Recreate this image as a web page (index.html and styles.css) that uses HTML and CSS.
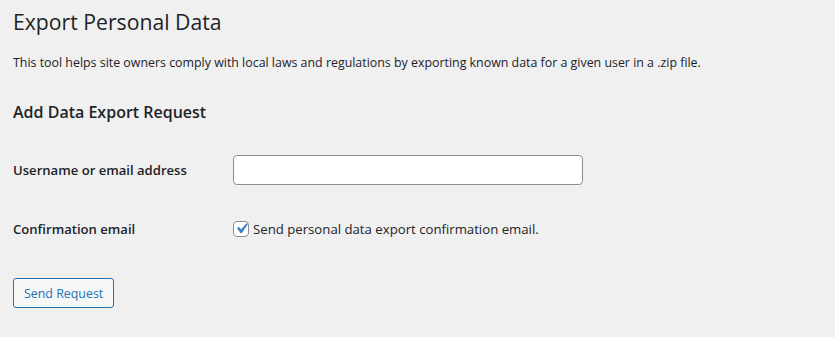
FILE: index.html
```html
<!DOCTYPE html>
<html>
<head>
<meta charset="utf-8">
<link rel="stylesheet" href="styles.css">
</head>
<body>
<div class="wrap">
  <h1 class="title">Export Personal Data</h1>
  <p class="intro">This tool helps site owners comply with local laws and regulations by exporting known data for a given user in a .zip file.</p>
  <h2 class="subtitle">Add Data Export Request</h2>
  <div class="form">
    <div class="row row-user">
      <label class="label">Username or email address</label>
      <input class="text-input" type="text">
    </div>
    <div class="row row-confirm">
      <div class="label">Confirmation email</div>
      <label class="check-label">
        <span class="checkbox"><svg viewBox="0 0 20 20" width="21" height="21"><path d="M14.83 4.89l1.34.94-5.81 8.38H9.02L5.78 9.67l1.34-1.25 2.57 2.4z" fill="#3582c4"/></svg></span>
        <span>Send personal data export confirmation email.</span>
      </label>
    </div>
  </div>
  <button class="button">Send Request</button>
</div>
</body>
</html>
```

FILE: styles.css
```css
html, body {
  margin: 0;
  padding: 0;
  background: #f0f0f1;
  color: #1d2327;
  font-family: "Open Sans", "Noto Sans", sans-serif;
  font-size: 13px;
}
.wrap {
  padding: 0 13px;
  display: flex;
  flex-direction: column;
  align-items: flex-start;
}
.title {
  font-size: 21.2px;
  font-weight: 400;
  line-height: 30px;
  margin: 7px 0 0;
}
.intro {
  font-size: 12.4px;
  margin: 16px 0 0;
  line-height: 20px;
}
.subtitle {
  font-size: 16px;
  font-weight: 600;
  line-height: 24px;
  margin: 27px 0 0;
}
.form {
  display: flex;
  flex-direction: column;
}
.row {
  display: flex;
  align-items: center;
}
.label {
  width: 220px;
  font-size: 13.1px;
  font-weight: 600;
}
.row-user {
  margin-top: 31px;
}
.text-input {
  width: 350px;
  height: 30px;
  box-sizing: border-box;
  border: 1px solid #8c8f94;
  border-radius: 4px;
  background: #fff;
  margin: 0;
}
.row-confirm {
  margin-top: 35px;
}
.check-label {
  display: flex;
  align-items: center;
  gap: 4px;
  font-size: 13.2px;
}
.checkbox {
  width: 16px;
  height: 16px;
  box-sizing: border-box;
  border: 1px solid #8c8f94;
  border-radius: 4px;
  background: #fff;
  display: flex;
  align-items: center;
  justify-content: center;
}
.checkbox svg {
  width: 21px;
  height: 21px;
  flex: none;
  margin: -1px 0 0 1px;
}
.button {
  margin-top: 40px;
  height: 30px;
  padding: 0 10px;
  border: 1px solid #2271b1;
  border-radius: 3px;
  background: #f6f7f7;
  color: #2271b1;
  font-family: inherit;
  font-size: 12.4px;
}
```
